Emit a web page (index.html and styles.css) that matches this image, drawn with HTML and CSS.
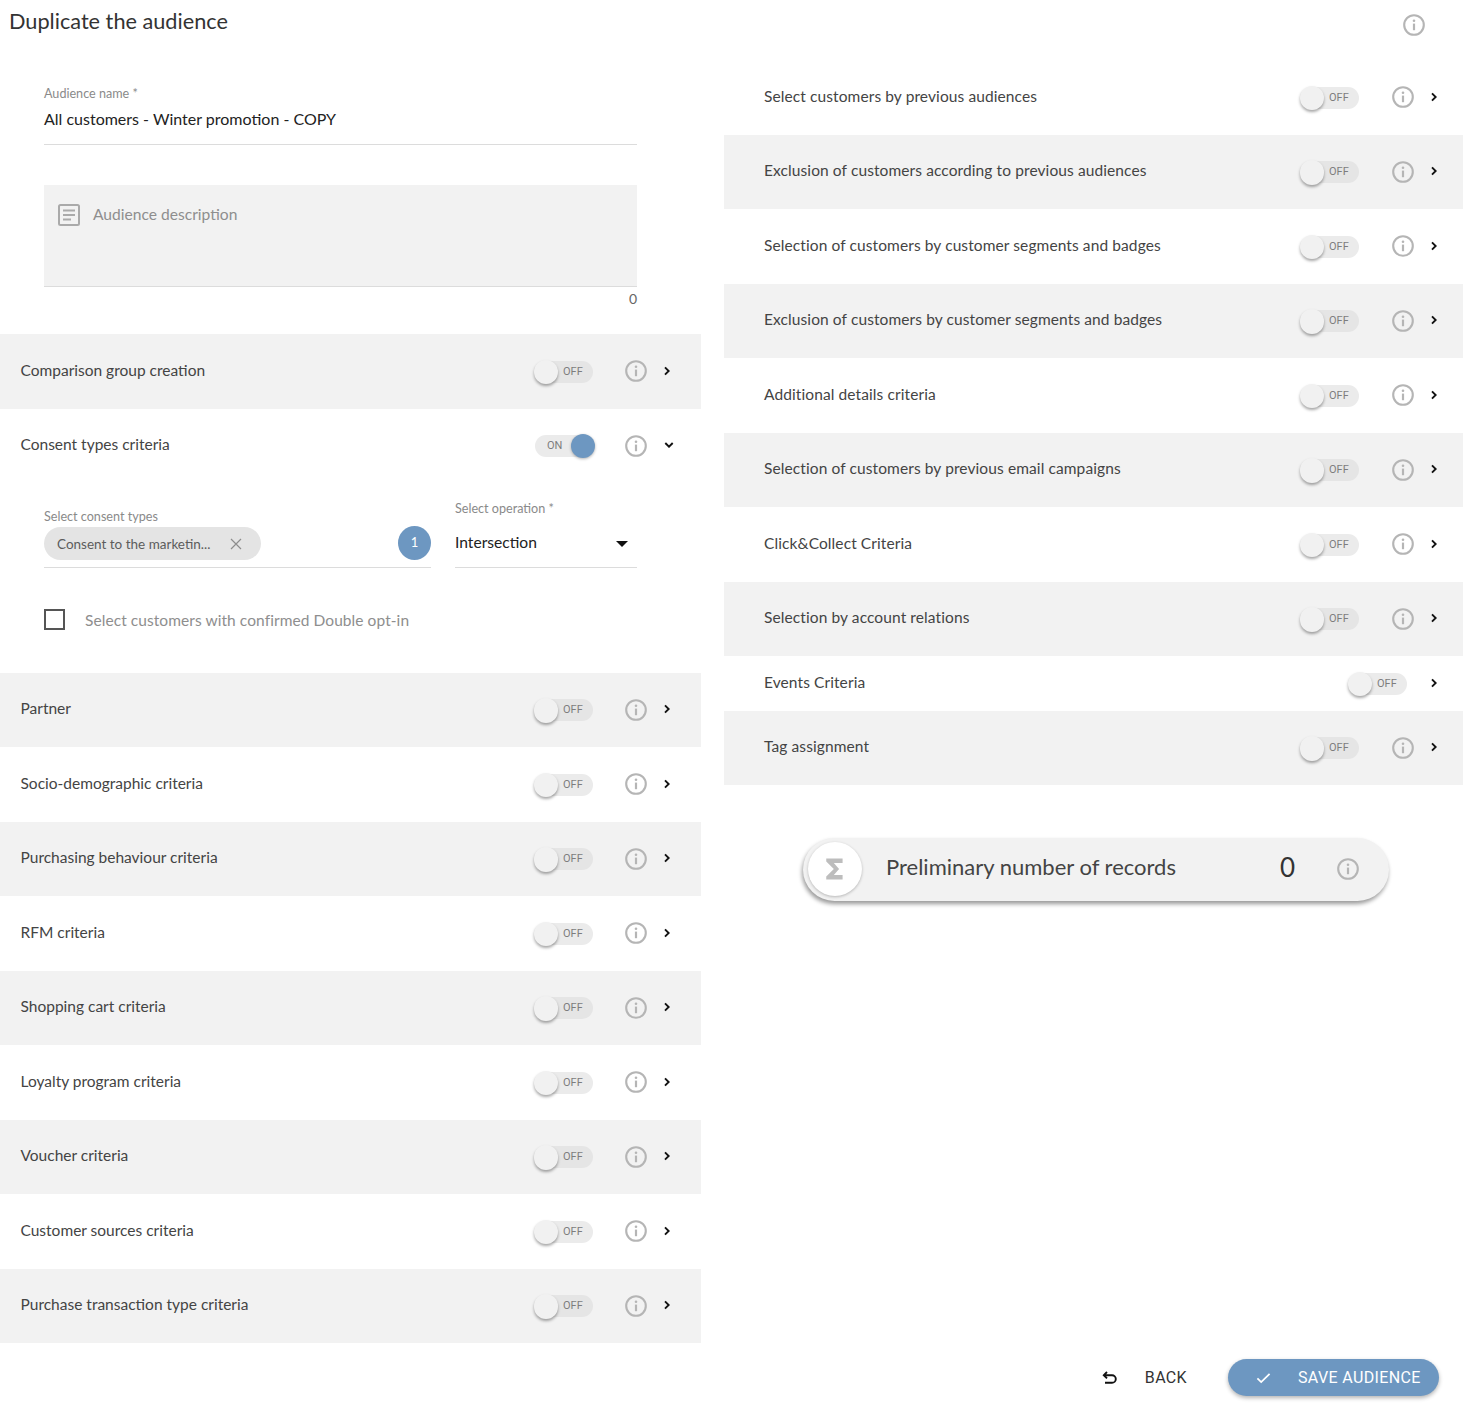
FILE: index.html
```html
<!DOCTYPE html>
<html lang="en">
<head>
  <meta charset="UTF-8">
  <title>Duplicate the audience</title>
  <link rel="stylesheet" href="styles.css">
</head>
<body>
  <svg class="defs" width="0" height="0">
    <symbol id="info" viewBox="0 0 22 22">
      <circle cx="11" cy="11" r="9.8" fill="none" stroke="currentColor" stroke-width="2.1"/>
      <circle cx="11" cy="6.800" r="1.300" fill="currentColor"/>
      <rect x="9.900" y="9.600" width="2.200" height="6.600" fill="currentColor"/>
    </symbol>
    <symbol id="chev-right" viewBox="0 0 6 10">
      <path d="M1 1.300L4.700 5 1 8.700" fill="none" stroke="currentColor" stroke-width="1.900"/>
    </symbol>
    <symbol id="chev-down" viewBox="0 0 10 6">
      <path d="M1.300 1L5 4.700 8.700 1" fill="none" stroke="currentColor" stroke-width="1.900"/>
    </symbol>
  </svg>

  <header class="top">
    <h1>Duplicate the audience</h1>
    <svg class="info top-info"><use href="#info"/></svg>
  </header>

  <div class="columns">
    <div class="col-left">
      <div class="form-head">
        <div class="field-name">
          <label>Audience name *</label>
          <div class="value">All customers - Winter promotion - COPY</div>
        </div>
        <div class="desc">
          <svg class="desc-icon" viewBox="0 0 22 22">
            <rect x="1" y="1" width="20" height="20" rx="1.5" fill="none" stroke="currentColor" stroke-width="2"/>
            <path d="M5 6.500h12M5 11h12M5 15.500h8" stroke="currentColor" stroke-width="2"/>
          </svg>
          <span>Audience description</span>
        </div>
        <div class="counter">0</div>
      </div>

      <div class="row grey">
        <span class="row-title">Comparison group creation</span>
        <span class="toggle"><i class="knob"></i><b>OFF</b></span>
        <svg class="info"><use href="#info"/></svg>
        <svg class="chev"><use href="#chev-right"/></svg>
      </div>

      <div class="row">
        <span class="row-title">Consent types criteria</span>
        <span class="toggle on"><b>ON</b><i class="knob"></i></span>
        <svg class="info"><use href="#info"/></svg>
        <svg class="chev-d"><use href="#chev-down"/></svg>
      </div>
      <div class="consent">
        <div class="consent-fields">
          <div class="consent-types">
            <label>Select consent types</label>
            <div class="chip-line">
              <span class="chip">Consent to the marketin...
                <svg class="chip-x" viewBox="0 0 12 12"><path d="M1 1l10 10M11 1L1 11" stroke="currentColor" stroke-width="1.2"/></svg>
              </span>
              <span class="count-badge">1</span>
            </div>
          </div>
          <div class="operation">
            <label>Select operation *</label>
            <div class="select-line">Intersection<i class="caret"></i></div>
          </div>
        </div>
        <div class="check-line">
          <i class="checkbox"></i>
          <span>Select customers with confirmed Double opt-in</span>
        </div>
      </div>

      <div class="row grey">
        <span class="row-title">Partner</span>
        <span class="toggle"><i class="knob"></i><b>OFF</b></span>
        <svg class="info"><use href="#info"/></svg>
        <svg class="chev"><use href="#chev-right"/></svg>
      </div>
      <div class="row">
        <span class="row-title">Socio-demographic criteria</span>
        <span class="toggle"><i class="knob"></i><b>OFF</b></span>
        <svg class="info"><use href="#info"/></svg>
        <svg class="chev"><use href="#chev-right"/></svg>
      </div>
      <div class="row grey">
        <span class="row-title">Purchasing behaviour criteria</span>
        <span class="toggle"><i class="knob"></i><b>OFF</b></span>
        <svg class="info"><use href="#info"/></svg>
        <svg class="chev"><use href="#chev-right"/></svg>
      </div>
      <div class="row">
        <span class="row-title">RFM criteria</span>
        <span class="toggle"><i class="knob"></i><b>OFF</b></span>
        <svg class="info"><use href="#info"/></svg>
        <svg class="chev"><use href="#chev-right"/></svg>
      </div>
      <div class="row grey">
        <span class="row-title">Shopping cart criteria</span>
        <span class="toggle"><i class="knob"></i><b>OFF</b></span>
        <svg class="info"><use href="#info"/></svg>
        <svg class="chev"><use href="#chev-right"/></svg>
      </div>
      <div class="row">
        <span class="row-title">Loyalty program criteria</span>
        <span class="toggle"><i class="knob"></i><b>OFF</b></span>
        <svg class="info"><use href="#info"/></svg>
        <svg class="chev"><use href="#chev-right"/></svg>
      </div>
      <div class="row grey">
        <span class="row-title">Voucher criteria</span>
        <span class="toggle"><i class="knob"></i><b>OFF</b></span>
        <svg class="info"><use href="#info"/></svg>
        <svg class="chev"><use href="#chev-right"/></svg>
      </div>
      <div class="row">
        <span class="row-title">Customer sources criteria</span>
        <span class="toggle"><i class="knob"></i><b>OFF</b></span>
        <svg class="info"><use href="#info"/></svg>
        <svg class="chev"><use href="#chev-right"/></svg>
      </div>
      <div class="row grey">
        <span class="row-title">Purchase transaction type criteria</span>
        <span class="toggle"><i class="knob"></i><b>OFF</b></span>
        <svg class="info"><use href="#info"/></svg>
        <svg class="chev"><use href="#chev-right"/></svg>
      </div>
    </div>

    <div class="col-right">
      <div class="row">
        <span class="row-title">Select customers by previous audiences</span>
        <span class="toggle"><i class="knob"></i><b>OFF</b></span>
        <svg class="info"><use href="#info"/></svg>
        <svg class="chev"><use href="#chev-right"/></svg>
      </div>
      <div class="row grey">
        <span class="row-title">Exclusion of customers according to previous audiences</span>
        <span class="toggle"><i class="knob"></i><b>OFF</b></span>
        <svg class="info"><use href="#info"/></svg>
        <svg class="chev"><use href="#chev-right"/></svg>
      </div>
      <div class="row">
        <span class="row-title">Selection of customers by customer segments and badges</span>
        <span class="toggle"><i class="knob"></i><b>OFF</b></span>
        <svg class="info"><use href="#info"/></svg>
        <svg class="chev"><use href="#chev-right"/></svg>
      </div>
      <div class="row grey">
        <span class="row-title">Exclusion of customers by customer segments and badges</span>
        <span class="toggle"><i class="knob"></i><b>OFF</b></span>
        <svg class="info"><use href="#info"/></svg>
        <svg class="chev"><use href="#chev-right"/></svg>
      </div>
      <div class="row">
        <span class="row-title">Additional details criteria</span>
        <span class="toggle"><i class="knob"></i><b>OFF</b></span>
        <svg class="info"><use href="#info"/></svg>
        <svg class="chev"><use href="#chev-right"/></svg>
      </div>
      <div class="row grey">
        <span class="row-title">Selection of customers by previous email campaigns</span>
        <span class="toggle"><i class="knob"></i><b>OFF</b></span>
        <svg class="info"><use href="#info"/></svg>
        <svg class="chev"><use href="#chev-right"/></svg>
      </div>
      <div class="row">
        <span class="row-title">Click&amp;Collect Criteria</span>
        <span class="toggle"><i class="knob"></i><b>OFF</b></span>
        <svg class="info"><use href="#info"/></svg>
        <svg class="chev"><use href="#chev-right"/></svg>
      </div>
      <div class="row grey">
        <span class="row-title">Selection by account relations</span>
        <span class="toggle"><i class="knob"></i><b>OFF</b></span>
        <svg class="info"><use href="#info"/></svg>
        <svg class="chev"><use href="#chev-right"/></svg>
      </div>
      <div class="row short">
        <span class="row-title">Events Criteria</span>
        <span class="toggle"><i class="knob"></i><b>OFF</b></span>
        <svg class="chev"><use href="#chev-right"/></svg>
      </div>
      <div class="row grey">
        <span class="row-title">Tag assignment</span>
        <span class="toggle"><i class="knob"></i><b>OFF</b></span>
        <svg class="info"><use href="#info"/></svg>
        <svg class="chev"><use href="#chev-right"/></svg>
      </div>

      <div class="records">
        <span class="sigma">
          <svg viewBox="0 0 24 24"><path d="M18.500 3H4.500v2.600L11 12l-6.500 6.400V21h14v-3.800H11L15.500 12 11 6.800h7.500z"/></svg>
        </span>
        <span class="records-label">Preliminary number of records</span>
        <span class="records-num">0</span>
        <svg class="info"><use href="#info"/></svg>
      </div>
    </div>
  </div>

  <footer class="actions">
    <button class="btn-back" type="button">
      <svg viewBox="0 0 16 14"><path d="M5 1L1.800 4.200 5 7.400M2 4.200h8a3.500 3.500 0 0 1 0 7.600H3" fill="none" stroke="currentColor" stroke-width="1.900"/></svg>
      BACK
    </button>
    <button class="btn-save" type="button">
      <svg viewBox="0 0 16 12"><path d="M1.500 6.500L5.500 10.300 14.500 1.500" fill="none" stroke="currentColor" stroke-width="1.900"/></svg>
      SAVE AUDIENCE
    </button>
  </footer>
</body>
</html>
```

FILE: styles.css
```css
:root {
  --grey-bg: #f2f2f2;
  --blue: #6d97c1;
  --line: #dcdcdc;
  --icon-grey: #b5b5b5;
  --text: #444;
}

* {
  box-sizing: border-box;
}

body {
  margin: 0;
  background: #fff;
  color: var(--text);
  font-family: 'Lato', 'Noto Sans', sans-serif;
  font-size: 15.5px;
  overflow-x: hidden;
}

.defs {
  position: absolute;
}

.top {
  height: 60px;
  display: flex;
  justify-content: space-between;
  padding: 8px 38px 0 9px;
}

h1 {
  margin: 0;
  font-size: 21.7px;
  line-height: 27px;
  font-weight: 400;
  color: #333;
}

.info {
  width: 22px;
  height: 22px;
  color: var(--icon-grey);
  flex: none;
}

.top-info {
  margin-top: 6px;
}

.columns {
  display: grid;
  grid-template-columns: 701px 739px;
  column-gap: 23px;
  height: 1283px;
}

/* audience name and description */
.form-head {
  height: 274px;
  padding: 27px 64px 0 44px;
}

label {
  display: block;
  font-size: 12.6px;
  line-height: 14px;
  color: #8a8a8a;
}

.field-name {
  height: 58px;
  border-bottom: 1px solid var(--line);
}

.value {
  margin-top: 8px;
  font-size: 16px;
  line-height: 20px;
  color: #222;
}

.desc {
  margin-top: 40px;
  height: 102px;
  padding: 18px 14px 0;
  display: flex;
  align-items: flex-start;
  gap: 13px;
  background: var(--grey-bg);
  border-bottom: 1px solid var(--line);
  color: #8e8e8e;
  font-size: 15.6px;
  line-height: 22px;
}

.desc-icon {
  width: 22px;
  height: 22px;
  margin-top: 1px;
  color: #aaa;
}

.counter {
  margin-top: 4px;
  text-align: right;
  font-size: 14px;
  line-height: 16px;
  color: #666;
}

/* rows */
.row {
  height: 74.5px;
  display: flex;
  align-items: center;
  padding: 0 30px 0 20.5px;
}

.grey {
  background: var(--grey-bg);
}

.row-title {
  flex: 1;
  line-height: 20px;
  margin-top: -3px;
}

.toggle {
  position: relative;
  width: 58px;
  height: 22px;
  margin-top: 1px;
  margin-right: 32px;
  border-radius: 11px;
  background: #ebebeb;
  font-family: 'Roboto', sans-serif;
}

.grey .toggle {
  background: #e5e5e5;
}

.toggle b {
  position: absolute;
  top: 0;
  left: 28px;
  font-size: 11px;
  font-weight: 400;
  line-height: 21px;
  color: #7d7d7d;
}

.knob {
  position: absolute;
  top: -1px;
  left: -1.5px;
  width: 24.5px;
  height: 24.5px;
  border-radius: 50%;
  background: #f1f1f1;
  box-shadow: 0 2px 3px rgba(0, 0, 0, 0.35);
}

.toggle.on b {
  left: 12px;
}

.toggle.on .knob {
  left: 36px;
  width: 24px;
  height: 24px;
  background: var(--blue);
  box-shadow: 0 1px 3px rgba(0, 0, 0, 0.3);
}

.chev {
  width: 6px;
  height: 10px;
  margin: -1px 1px 0 17px;
  color: #111;
  flex: none;
}

.chev-d {
  width: 10px;
  height: 6px;
  margin: -1px -3px 0 17px;
  color: #111;
  flex: none;
}

.col-right .row {
  padding-left: 40px;
  padding-right: 25px;
}

.col-right .row-title {
  letter-spacing: 0.1px;
}

.col-right .toggle {
  margin-right: 33px;
}

.col-right .short {
  height: 54.5px;
}

.col-right .short .toggle {
  margin-right: 7px;
}

/* expanded consent block */
.consent {
  height: 189.5px;
  padding: 18px 64px 0 44px;
}

.consent-fields {
  display: grid;
  grid-template-columns: 387px 182px;
  column-gap: 24px;
}

.consent-types {
  padding-top: 9px;
}

.operation {
  padding-top: 1px;
}

.consent-types,
.operation {
  height: 67px;
  border-bottom: 1px solid var(--line);
}

.chip-line {
  display: flex;
  align-items: center;
  justify-content: space-between;
  margin-top: 3px;
}

.chip {
  width: 217px;
  height: 33px;
  padding: 0 13px;
  border-radius: 17px;
  display: flex;
  align-items: center;
  justify-content: space-between;
  background: #e4e4e4;
  font-size: 13.5px;
  color: #5c5c5c;
}

.chip-x {
  width: 12px;
  height: 12px;
  margin-right: 6px;
  color: #8d8d8d;
}

.count-badge {
  width: 33px;
  height: 34px;
  margin-top: -1px;
  border-radius: 50%;
  background: var(--blue);
  color: #fff;
  font-size: 13px;
  line-height: 33px;
  text-align: center;
}

.select-line {
  display: flex;
  align-items: center;
  justify-content: space-between;
  margin-top: 16px;
  padding-right: 9px;
  font-size: 15.6px;
  line-height: 20px;
  color: #222;
}

.caret {
  width: 0;
  height: 0;
  margin-top: 3px;
  border-left: 6px solid transparent;
  border-right: 6px solid transparent;
  border-top: 6px solid #111;
}

.check-line {
  display: flex;
  align-items: center;
  gap: 20px;
  margin-top: 41px;
  color: #8e8e8e;
  letter-spacing: 0.07px;
}

.checkbox {
  width: 21px;
  height: 21px;
  border: 2px solid #555;
}

/* number of records pill */
.records {
  width: 586px;
  height: 63px;
  margin: 52.5px 0 0 79px;
  padding: 0 30px 0 5px;
  display: flex;
  align-items: center;
  border-radius: 32px;
  background: var(--grey-bg);
  box-shadow: -1px 3px 4px rgba(0, 0, 0, 0.4);
}

.sigma {
  width: 54px;
  height: 54px;
  border-radius: 50%;
  background: #fff;
  box-shadow: 0 1px 3px rgba(0, 0, 0, 0.25);
  display: flex;
  align-items: center;
  justify-content: center;
}

.sigma svg {
  width: 28px;
  height: 28px;
  fill: #bdbdbd;
}

.records-label {
  flex: 1;
  margin: -5px 0 0 24px;
  font-size: 22px;
  color: #444;
}

.records-num {
  margin: -5px 42px 0 0;
  font-size: 26px;
  color: #333;
}

/* bottom buttons */
.actions {
  display: flex;
  justify-content: flex-end;
  align-items: center;
  gap: 41px;
  padding: 16px 24px 9px 0;
  font-family: 'Roboto', sans-serif;
}

.actions button {
  border: 0;
  font-family: inherit;
  font-size: 16px;
  font-weight: 400;
  letter-spacing: 0.35px;
  display: flex;
  align-items: center;
  cursor: pointer;
}

.btn-back {
  gap: 27px;
  padding: 0;
  background: none;
  color: #333;
}

.btn-back svg {
  width: 16px;
  height: 14px;
  color: #111;
}

.btn-save {
  width: 211px;
  height: 37px;
  padding: 0 0 0 28px;
  gap: 27px;
  border-radius: 19px;
  background: var(--blue);
  color: #fff;
  box-shadow: 0 2px 4px rgba(0, 0, 0, 0.3);
}

.btn-save svg {
  width: 15px;
  height: 12px;
}
```
